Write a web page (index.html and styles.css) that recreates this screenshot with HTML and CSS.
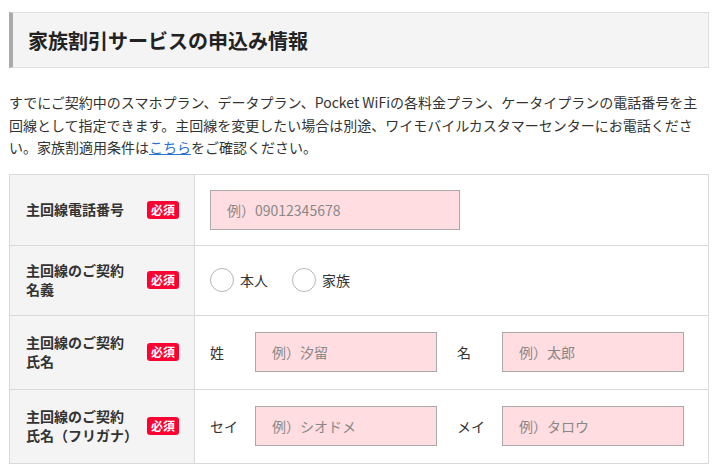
FILE: index.html
```html
<!DOCTYPE html>
<html lang="ja">

<head>
    <meta charset="UTF-8">
    <meta name="viewport" content="width=device-width, initial-scale=1.0">
    <title>家族割引サービスの申込み情報</title>
    <link rel="stylesheet" href="styles.css">
</head>

<body>
    <div class="wrap">
        <h2 class="section-title">家族割引サービスの申込み情報</h2>

        <p class="lead">すでにご契約中のスマホプラン、データプラン、Pocket WiFiの各料金プラン、ケータイプランの電話番号を主回線として指定できます。主回線を変更したい場合は別途、ワイモバイルカスタマーセンターにお電話ください。家族割適用条件は<a href="#">こちら</a>をご確認ください。</p>

        <table class="form-table">
            <tr class="row-phone">
                <th>
                    <div class="th-inner">
                        <span class="th-label">主回線電話番号</span>
                        <span class="required">必須</span>
                    </div>
                </th>
                <td>
                    <input class="field field-wide" type="text" placeholder="例）09012345678">
                </td>
            </tr>
            <tr class="row-owner">
                <th>
                    <div class="th-inner">
                        <span class="th-label">主回線のご契約<br>名義</span>
                        <span class="required">必須</span>
                    </div>
                </th>
                <td>
                    <div class="radios">
                        <label class="radio"><input type="radio" name="owner"><span class="radio-mark"></span>本人</label>
                        <label class="radio"><input type="radio" name="owner"><span class="radio-mark"></span>家族</label>
                    </div>
                </td>
            </tr>
            <tr class="row-name">
                <th>
                    <div class="th-inner">
                        <span class="th-label">主回線のご契約<br>氏名</span>
                        <span class="required">必須</span>
                    </div>
                </th>
                <td>
                    <div class="name-fields">
                        <div class="name-group">
                            <span class="name-label">姓</span>
                            <input class="field" type="text" placeholder="例）汐留">
                        </div>
                        <div class="name-group">
                            <span class="name-label">名</span>
                            <input class="field" type="text" placeholder="例）太郎">
                        </div>
                    </div>
                </td>
            </tr>
            <tr class="row-name">
                <th>
                    <div class="th-inner">
                        <span class="th-label">主回線のご契約<br>氏名（フリガナ）</span>
                        <span class="required">必須</span>
                    </div>
                </th>
                <td>
                    <div class="name-fields">
                        <div class="name-group">
                            <span class="name-label">セイ</span>
                            <input class="field" type="text" placeholder="例）シオドメ">
                        </div>
                        <div class="name-group">
                            <span class="name-label">メイ</span>
                            <input class="field" type="text" placeholder="例）タロウ">
                        </div>
                    </div>
                </td>
            </tr>
        </table>
    </div>
</body>

</html>
```

FILE: styles.css
```css
body {
    margin: 0;
    font-family: "Noto Sans CJK JP", "Noto Sans", sans-serif;
    color: #333;
    background-color: #fff;
}

.wrap {
    width: 700px;
    padding: 12px 0 0 9px;
}

.section-title {
    margin: 0;
    height: 54px;
    display: flex;
    align-items: center;
    padding-left: 15px;
    background-color: #f4f4f4;
    border: 1px solid #ddd;
    border-left: 4px solid #aaa;
    font-size: 20px;
    font-weight: bold;
    color: #222;
}

.lead {
    margin: 23px 0 15px;
    font-size: 14px;
    line-height: 22.5px;
    color: #333;
}

.lead a {
    color: #2a6fd6;
    text-decoration: underline;
}

.form-table {
    width: 700px;
    border-collapse: collapse;
}

.form-table th,
.form-table td {
    border: 1px solid #d9d9d9;
    padding: 0 15px;
}

.form-table th {
    width: 153px;
    padding-left: 16px;
    background-color: #f4f4f4;
    text-align: left;
}

.row-phone th {
    height: 70px;
}

.row-owner th {
    height: 69px;
}

.row-name th {
    height: 73px;
}

.th-inner {
    display: flex;
    align-items: center;
    justify-content: space-between;
}

.th-label {
    font-size: 14px;
    line-height: 19px;
    font-weight: bold;
    color: #333;
}

.required {
    display: inline-block;
    width: 32px;
    height: 18px;
    line-height: 18px;
    text-align: center;
    background-color: #ff0033;
    border-radius: 3px;
    color: #fff;
    font-size: 12px;
    font-weight: bold;
}

.field {
    box-sizing: border-box;
    width: 182px;
    height: 40px;
    padding: 0 16px;
    border: 1px solid #aaa;
    background-color: #ffdde0;
    font-family: inherit;
    font-size: 14px;
    color: #333;
    outline: none;
}

.field::placeholder {
    color: #888;
}

.field-wide {
    display: block;
    width: 250px;
}

.radios {
    display: flex;
    gap: 24px;
}

.radio {
    display: flex;
    align-items: center;
    gap: 6px;
    font-size: 14px;
    color: #333;
}

.radio input {
    display: none;
}

.radio-mark {
    box-sizing: border-box;
    width: 24px;
    height: 24px;
    border: 1px solid #b5b5b5;
    border-radius: 50%;
    background-color: #fff;
}

.name-fields {
    display: flex;
    gap: 20px;
}

.name-group {
    display: flex;
    align-items: center;
}

.name-label {
    width: 45px;
    font-size: 14px;
    color: #333;
}
```
